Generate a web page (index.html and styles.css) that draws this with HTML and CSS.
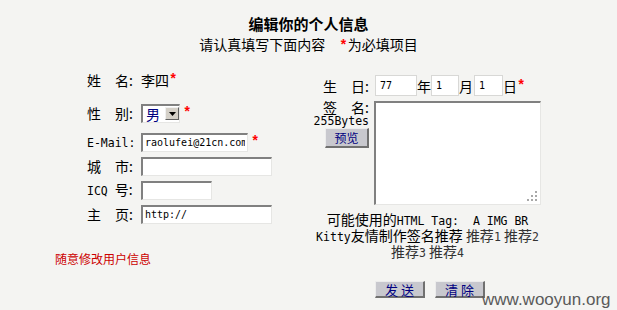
FILE: index.html
```
<!DOCTYPE html>
<html lang="zh-CN">
<head>
<meta charset="utf-8">
<title>编辑你的个人信息</title>
<link rel="stylesheet" href="styles.css">
</head>
<body>
<div class="page">
  <header class="head">
    <h1 class="title">编辑你的个人信息</h1>
    <p class="sub">请认真填写下面内容　<span class="req">*</span>为必填项目</p>
  </header>
  <main class="form">
    <section class="col-left">
      <div class="row r-name"><span class="lab">姓　名:</span><span class="val">李四</span><span class="req">*</span></div>
      <div class="row r-sex"><span class="lab">性　别:</span><div class="sel"><span class="sel-v">男</span><span class="sel-btn"><svg width="7" height="4" viewBox="0 0 7 4"><path d="M0 0h7L3.5 4z" fill="#000"/></svg></span></div><span class="req">*</span></div>
      <div class="row"><span class="lab"><span class="en">E-Mail:</span></span><input class="in w-email" value="raolufei@21cn.com"><span class="req">*</span></div>
      <div class="row"><span class="lab">城　市:</span><input class="in w-long"></div>
      <div class="row"><span class="lab"><span class="en">ICQ </span>号:</span><input class="in w-icq"></div>
      <div class="row"><span class="lab">主　页:</span><input class="in w-long" value="http://"></div>
      <p class="note">随意修改用户信息</p>
    </section>
    <section class="col-right">
      <div class="row-birth"><span class="rlab">生　日:</span><input class="bin w-y" value="77"><span class="unit">年</span><input class="bin w-m" value="1"><span class="unit">月</span><input class="bin w-d" value="1"><span class="unit">日</span><span class="req">*</span></div>
      <div class="row-sign">
        <div class="sign-lab"><span class="sl">签　名:</span><span class="en bytes">255Bytes</span><button class="btn btn-prev" type="button">预览</button></div>
        <div class="ta-wrap"><textarea class="ta"></textarea><svg class="grip" width="11" height="11" viewBox="0 0 11 11"><g fill="#a8a8a8"><rect x="8" y="0" width="2" height="2"/><rect x="4" y="4" width="2" height="2"/><rect x="8" y="4" width="2" height="2"/><rect x="0" y="8" width="2" height="2"/><rect x="4" y="8" width="2" height="2"/><rect x="8" y="8" width="2" height="2"/></g></svg></div>
      </div>
      <div class="tags">
        <div>可能使用的<span class="en">HTML Tag:&nbsp; A IMG BR</span></div>
        <div><span class="en">Kitty</span>友情制作签名推荐 <span class="lnk">推荐<span class="en">1</span></span> <span class="lnk">推荐<span class="en">2</span></span></div>
        <div><span class="lnk">推荐<span class="en">3</span></span> <span class="lnk">推荐<span class="en">4</span></span></div>
      </div>
      <div class="actions"><button class="btn btn-act" type="button">发 送</button><button class="btn btn-act" type="button">清 除</button></div>
    </section>
  </main>
  <div class="wm">www.wooyun.org</div>
</div>
</body>
</html>
```
FILE: styles.css
```
html, body {
  margin: 0;
  padding: 0;
  background: #f4f4f2;
}
body {
  font-family: "Noto Sans CJK SC", "Noto Sans", sans-serif;
  font-size: 14px;
  color: #000;
}
.page {
  position: relative;
  width: 617px;
  height: 310px;
  overflow: hidden;
}
.head {
  padding-top: 14px;
  text-align: center;
}
.title {
  margin: 0;
  font-size: 15px;
  font-weight: bold;
  line-height: 20px;
}
.sub {
  margin: 0;
  font-size: 14px;
  line-height: 20px;
}
.req {
  color: #ff0000;
  font-family: "Liberation Mono", monospace;
  font-weight: bold;
  font-size: 14px;
}
.en {
  font-family: "DejaVu Sans Mono", "Liberation Mono", monospace;
  font-size: 11.5px;
}
.form {
  display: flex;
  margin-top: 12px;
  padding-left: 87px;
}
.col-left {
  width: 227px;
  display: flex;
  flex-direction: column;
}
.row {
  display: flex;
  align-items: center;
  height: 24px;
  white-space: nowrap;
}
.r-name { margin-bottom: 9px; }
.r-sex { margin-bottom: 5px; }
.lab {
  width: 54px;
  flex: none;
  line-height: 14px;
}
.in {
  box-sizing: border-box;
  height: 19px;
  margin: 0 3px 0 0;
  padding: 0 2px;
  background: #fff;
  border-style: solid;
  border-width: 2px 1px 1px 2px;
  border-color: #808080 #e6e6e4 #e6e6e4 #808080;
  font-family: "DejaVu Sans Mono", monospace;
  font-size: 10px;
  color: #000;
  outline: none;
}
.w-email { width: 107px; }
.w-long { width: 131px; }
.w-icq { width: 71px; }
.sel {
  box-sizing: border-box;
  display: flex;
  align-items: center;
  width: 39px;
  height: 19px;
  margin-right: 3px;
  background: #fff;
  border-style: solid;
  border-width: 2px 1px 1px 2px;
  border-color: #808080 #e6e6e4 #e6e6e4 #808080;
}
.sel-v {
  color: #000080;
  padding-left: 3px;
  width: 19px;
  line-height: 14px;
}
.sel-btn {
  box-sizing: border-box;
  width: 14px;
  height: 13px;
  display: flex;
  align-items: center;
  justify-content: center;
  background: #d4d0c8;
  border-style: solid;
  border-width: 1px;
  border-color: #f0f0f0 #606060 #606060 #f0f0f0;
}
.note {
  margin: 26px 0 0 -32px;
  font-size: 12px;
  line-height: 14px;
  color: #cc0000;
}
.col-right {
  width: 227px;
  display: flex;
  flex-direction: column;
}
.row-birth {
  display: flex;
  align-items: center;
  height: 21px;
  margin-top: 7px;
  white-space: nowrap;
}
.rlab {
  width: 55px;
  text-align: right;
  margin-right: 6px;
  line-height: 14px;
}
.bin {
  box-sizing: border-box;
  height: 21px;
  margin: 0;
  padding: 0 0 0 4px;
  background: #fff;
  border: 1px solid #d8d8d6;
  font-family: "DejaVu Sans Mono", monospace;
  font-size: 10px;
  color: #000;
  outline: none;
}
.w-y { width: 42px; }
.w-m { width: 28px; margin-left: 0; }
.w-d { width: 29px; margin-left: 1px; }
.unit { width: 14px; line-height: 14px; }
.row-sign {
  display: flex;
  margin-top: 3px;
}
.sign-lab {
  width: 55px;
  display: flex;
  flex-direction: column;
  align-items: flex-end;
  line-height: 14px;
  margin-right: 5px;
}
.sl { display: block; margin-top: 1px; }
.bytes { display: block; line-height: 14px; }
.btn {
  box-sizing: border-box;
  margin: 0;
  padding: 0;
  background: #c8c8ce;
  border-style: solid;
  border-width: 1px 2px 2px 1px;
  border-color: #ececec #707070 #707070 #ececec;
  font-family: "Noto Sans CJK SC", sans-serif;
  color: #000080;
  cursor: pointer;
}
.btn-prev {
  width: 44px;
  height: 20px;
  font-size: 12px;
  line-height: 16px;
}
.ta-wrap {
  position: relative;
  margin-top: 2px;
  width: 167px;
  height: 104px;
}
.ta {
  box-sizing: border-box;
  display: block;
  width: 167px;
  height: 104px;
  margin: 0;
  padding: 2px;
  resize: none;
  background: #fff;
  border-style: solid;
  border-width: 2px 1px 1px 2px;
  border-color: #808080 #e6e6e4 #e6e6e4 #808080;
  outline: none;
}
.grip {
  position: absolute;
  right: 3px;
  bottom: 3px;
}
.tags {
  margin-top: 7px;
  text-align: center;
  line-height: 14px;
  font-size: 14px;
  white-space: nowrap;
}
.lnk { color: #333; }
.actions {
  display: flex;
  gap: 10px;
  margin-top: 21px;
  padding-left: 61px;
}
.btn-act {
  width: 50px;
  height: 17px;
  font-size: 13px;
  line-height: 13px;
}
.wm {
  position: absolute;
  left: 482px;
  top: 290px;
  font-family: "Liberation Sans", Arial, sans-serif;
  font-size: 17px;
  line-height: 20px;
  color: #5a5a5a;
}
```
